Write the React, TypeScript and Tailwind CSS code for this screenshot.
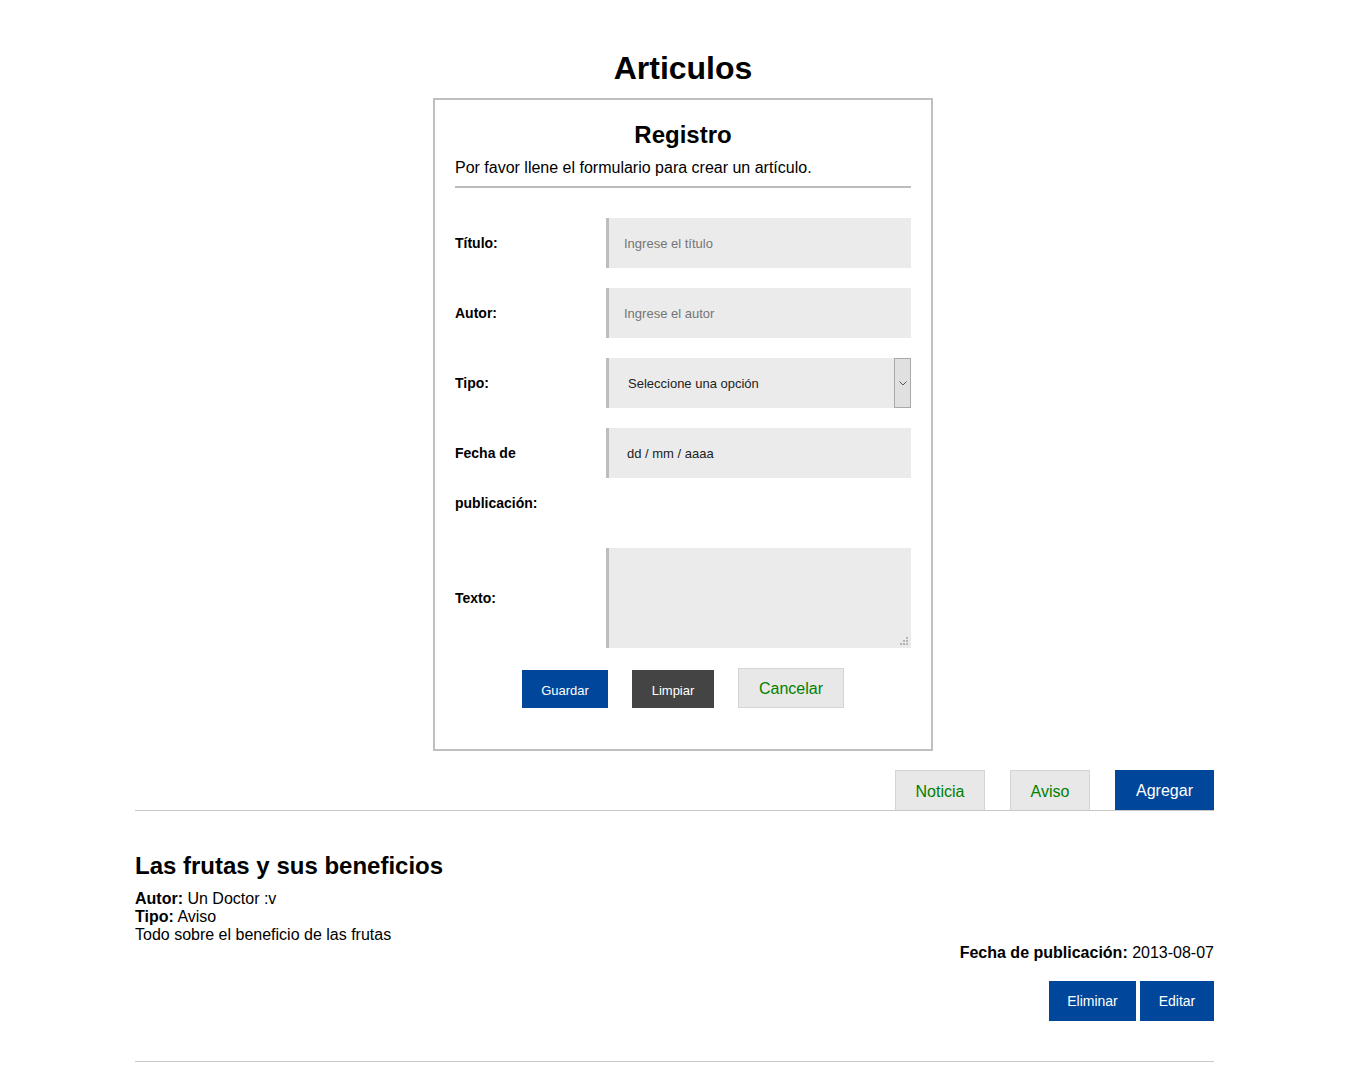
import React, { useState } from "react";

type Field = {
  label: string;
  placeholder: string;
};

const Articulos: React.FC = () => {
  const [titulo, setTitulo] = useState("");
  const [autor, setAutor] = useState("");
  const [texto, setTexto] = useState("");

  const fields: Field[] = [
    { label: "Título:", placeholder: "Ingrese el título" },
    { label: "Autor:", placeholder: "Ingrese el autor" },
  ];

  return (
    <div className="min-h-screen w-full bg-white text-black font-['Liberation_Sans',Arial,sans-serif]">
      <h1 className="pt-[50px] text-center text-[32px] font-bold leading-[37px]">
        Articulos
      </h1>

      {/* Formulario de registro */}
      <div className="mx-auto mt-[11px] w-[500px] border-2 border-[#c0c0c0] px-[20px] pt-[21px] pb-[41px]">
        <h2 className="text-center text-[24px] font-bold leading-[28px]">
          Registro
        </h2>
        <p className="mt-[10px] text-[16px] leading-[18px]">
          Por favor llene el formulario para crear un artículo.
        </p>
        <div className="mt-[9px] h-[2px] w-full bg-[#bcbcbc]" />

        <form
          className="mt-[30px] flex flex-col gap-[20px]"
          onSubmit={(e) => e.preventDefault()}
        >
          {fields.map((f, i) => (
            <div key={f.label} className="flex items-start">
              <label className="w-[151px] text-[14px] font-bold leading-[50px]">
                {f.label}
              </label>
              <input
                type="text"
                placeholder={f.placeholder}
                value={i === 0 ? titulo : autor}
                onChange={(e) =>
                  i === 0 ? setTitulo(e.target.value) : setAutor(e.target.value)
                }
                className="h-[50px] w-[305px] border-l-[3px] border-[#bdbdbd] bg-[#ebebeb] pl-[15px] pt-[1px] text-[13px] text-[#222] placeholder-[#757575] outline-none font-['Liberation_Sans',Arial,sans-serif]"
              />
            </div>
          ))}

          <div className="flex items-start">
            <label className="w-[151px] text-[14px] font-bold leading-[50px]">
              Tipo:
            </label>
            <div className="flex h-[50px] w-[305px] items-center border-l-[3px] border-[#bdbdbd] bg-[#ebebeb]">
              <span className="flex-1 pl-[19px] pt-[2px] text-[13px] text-[#222]">
                Seleccione una opción
              </span>
              <div className="flex h-full w-[17px] items-center justify-center border border-[#a9a9a9] bg-[#e0e0e0]">
                <svg width="8" height="5" viewBox="0 0 8 5" fill="none">
                  <path d="M0.5 0.5 L4 4 L7.5 0.5" stroke="#555" strokeWidth="1" />
                </svg>
              </div>
            </div>
          </div>

          <div className="flex items-start">
            <label className="w-[130px] mr-[21px] text-[14px] font-bold leading-[50px]">
              Fecha de publicación:
            </label>
            <div className="flex h-[50px] w-[305px] items-center border-l-[3px] border-[#bdbdbd] bg-[#ebebeb] pl-[18px] pt-[2px] text-[13px] text-[#222]">
              dd / mm / aaaa
            </div>
          </div>

          <div className="flex items-start">
            <label className="w-[151px] text-[14px] font-bold leading-[100px]">
              Texto:
            </label>
            <div className="relative">
              <textarea
                value={texto}
                onChange={(e) => setTexto(e.target.value)}
                className="block h-[100px] w-[305px] resize-none border-l-[3px] border-[#bdbdbd] bg-[#ebebeb] p-[10px] text-[13px] outline-none"
              />
              <svg
                className="absolute right-[3px] bottom-[3px]"
                width="8"
                height="8"
                viewBox="0 0 8 8"
              >
                <rect x="6" y="0" width="2" height="2" fill="#b5b5b5" />
                <rect x="3" y="3" width="2" height="2" fill="#b5b5b5" />
                <rect x="6" y="3" width="2" height="2" fill="#b5b5b5" />
                <rect x="0" y="6" width="2" height="2" fill="#b5b5b5" />
                <rect x="3" y="6" width="2" height="2" fill="#b5b5b5" />
                <rect x="6" y="6" width="2" height="2" fill="#b5b5b5" />
              </svg>
            </div>
          </div>

          <div className="flex items-end justify-center gap-[24px]">
            <button
              type="submit"
              className="h-[38px] w-[86px] bg-[#00479b] pt-[3px] text-[13px] text-white"
            >
              Guardar
            </button>
            <button
              type="reset"
              className="h-[38px] w-[82px] bg-[#444444] pt-[3px] text-[13px] text-white"
            >
              Limpiar
            </button>
            <button
              type="button"
              className="h-[40px] w-[106px] border border-[#d5d5d5] bg-[#e8e8e8] pt-[2px] text-[16px] text-[#008000]"
            >
              Cancelar
            </button>
          </div>
        </form>
      </div>

      {/* Listado */}
      <div className="ml-[135px] w-[1079px]">
        <div className="mt-[19px] flex justify-end gap-[25px] border-b border-[#c8c8c8]">
          <button className="h-[40px] w-[90px] border border-b-0 border-[#d5d5d5] bg-[#e8e8e8] pt-[2px] text-[16px] text-[#008000]">
            Noticia
          </button>
          <button className="h-[40px] w-[80px] border border-b-0 border-[#d5d5d5] bg-[#e8e8e8] pt-[2px] text-[16px] text-[#008000]">
            Aviso
          </button>
          <button className="h-[40px] w-[99px] bg-[#00479b] pt-[2px] text-[16px] text-white">
            Agregar
          </button>
        </div>

        <div className="border-b border-[#c8c8c8] pb-[40px]">
          <h3 className="mt-[41px] text-[24px] font-bold leading-[28px]">
            Las frutas y sus beneficios
          </h3>
          <div className="mt-[10px] text-[16px] leading-[18px]">
            <p>
              <b>Autor:</b> Un Doctor :v
            </p>
            <p>
              <b>Tipo:</b> Aviso
            </p>
            <p>Todo sobre el beneficio de las frutas</p>
            <p className="text-right">
              <b>Fecha de publicación:</b> 2013-08-07
            </p>
          </div>
          <div className="mt-[19px] flex justify-end gap-[4px]">
            <button className="h-[40px] w-[87px] bg-[#00479b] pt-[1px] text-[14px] text-white">
              Eliminar
            </button>
            <button className="h-[40px] w-[74px] bg-[#00479b] pt-[1px] text-[14px] text-white">
              Editar
            </button>
          </div>
        </div>
      </div>
    </div>
  );
};

export default Articulos;
